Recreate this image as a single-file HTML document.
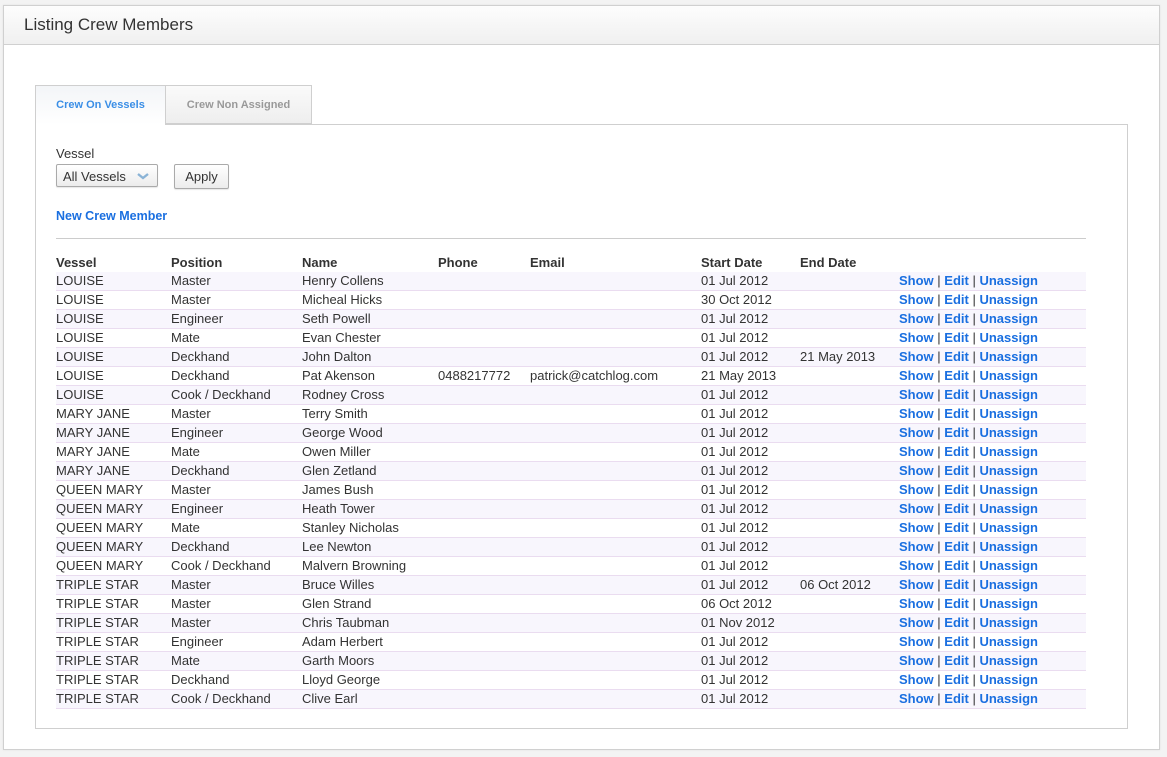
<!DOCTYPE html>
<html><head><meta charset="utf-8"><style>
body{margin:0;background:#f3f3f3;font-family:"Liberation Sans",sans-serif;width:1167px;height:757px;overflow:hidden;position:relative}
.outer{position:absolute;left:3px;top:5px;width:1155px;height:743px;background:#fff;border:1px solid #d0d0d0;box-shadow:0 0 2px rgba(0,0,0,.08)}
.hdr{height:38px;border-bottom:1px solid #d0d0d0;background:linear-gradient(#fdfdfd,#f0f0f0);font-size:17px;color:#333;line-height:37px;padding-left:20px}
.tabbox{position:absolute;left:31px;top:118px;width:1091px;height:603px;border:1px solid #cfcfcf}
.tab{position:absolute;top:79px;height:39px;font-size:11px;font-weight:bold;line-height:38px;text-align:center;box-sizing:border-box}
.t1{left:31px;width:131px;color:#3a8ee6;background:linear-gradient(#f3f5f8,#fff);border:1px solid #cfcfcf;border-bottom:none;height:40px;z-index:2}
.t2{left:161px;width:147px;color:#999;background:linear-gradient(#fafafa,#eee);border:1px solid #cfcfcf}
.lbl{position:absolute;left:52px;top:140px;font-size:13px;color:#333}
.sel{position:absolute;left:52px;top:158px;width:102px;height:23px;border:1px solid #aaa;border-radius:2px;background:linear-gradient(#fff,#ececec);font-size:13px;line-height:23px;padding-left:6px;box-sizing:border-box;color:#333;box-shadow:0 1px 1px rgba(0,0,0,.1)}
.sel svg{position:absolute;right:8px;top:8px}
.btn{position:absolute;left:170px;top:158px;width:55px;height:25px;border:1px solid #aaa;border-radius:2px;background:linear-gradient(#fff,#ececec);font-size:13px;line-height:23px;text-align:center;box-sizing:border-box;color:#333;box-shadow:0 1px 1px rgba(0,0,0,.1)}
.new{position:absolute;left:52px;top:203px;font-size:12.5px;font-weight:bold;color:#1a6fe0}
.hr{position:absolute;left:52px;top:232px;width:1030px;border-top:1px solid #ccc}
table{position:absolute;left:52px;top:248px;width:1030px;border-collapse:collapse;font-size:13px;color:#333}
th{text-align:left;font-weight:bold;height:18px;padding:0;line-height:18px}
td{padding:0;height:18px;line-height:18px;border-bottom:1px solid #eadcf0;white-space:nowrap}
tbody tr:nth-child(odd){background:#f8f6fd}
a{color:#1a6fe0;font-weight:bold;text-decoration:none}
</style></head><body>
<div class="outer">
<div class="hdr">Listing Crew Members</div>
<div class="tabbox"></div>
<div class="tab t1">Crew On Vessels</div>
<div class="tab t2">Crew Non Assigned</div>
<div class="lbl">Vessel</div>
<div class="sel">All Vessels<svg width="12" height="7" viewBox="0 0 12 7"><path d="M1 1l5 4 5-4" fill="none" stroke="#8ab3d6" stroke-width="2.4"/></svg></div>
<div class="btn">Apply</div>
<div class="new">New Crew Member</div>
<div class="hr"></div>
<table>
<colgroup><col style="width:115px"><col style="width:131px"><col style="width:136px"><col style="width:92px"><col style="width:171px"><col style="width:99px"><col style="width:99px"><col></colgroup>
<thead><tr><th>Vessel</th><th>Position</th><th>Name</th><th>Phone</th><th>Email</th><th>Start Date</th><th>End Date</th><th></th></tr></thead>
<tbody>
<tr><td>LOUISE</td><td>Master</td><td>Henry Collens</td><td></td><td></td><td>01 Jul 2012</td><td></td><td><a>Show</a> | <a>Edit</a> | <a>Unassign</a></td></tr>
<tr><td>LOUISE</td><td>Master</td><td>Micheal Hicks</td><td></td><td></td><td>30 Oct 2012</td><td></td><td><a>Show</a> | <a>Edit</a> | <a>Unassign</a></td></tr>
<tr><td>LOUISE</td><td>Engineer</td><td>Seth Powell</td><td></td><td></td><td>01 Jul 2012</td><td></td><td><a>Show</a> | <a>Edit</a> | <a>Unassign</a></td></tr>
<tr><td>LOUISE</td><td>Mate</td><td>Evan Chester</td><td></td><td></td><td>01 Jul 2012</td><td></td><td><a>Show</a> | <a>Edit</a> | <a>Unassign</a></td></tr>
<tr><td>LOUISE</td><td>Deckhand</td><td>John Dalton</td><td></td><td></td><td>01 Jul 2012</td><td>21 May 2013</td><td><a>Show</a> | <a>Edit</a> | <a>Unassign</a></td></tr>
<tr><td>LOUISE</td><td>Deckhand</td><td>Pat Akenson</td><td>0488217772</td><td>patrick@catchlog.com</td><td>21 May 2013</td><td></td><td><a>Show</a> | <a>Edit</a> | <a>Unassign</a></td></tr>
<tr><td>LOUISE</td><td>Cook / Deckhand</td><td>Rodney Cross</td><td></td><td></td><td>01 Jul 2012</td><td></td><td><a>Show</a> | <a>Edit</a> | <a>Unassign</a></td></tr>
<tr><td>MARY JANE</td><td>Master</td><td>Terry Smith</td><td></td><td></td><td>01 Jul 2012</td><td></td><td><a>Show</a> | <a>Edit</a> | <a>Unassign</a></td></tr>
<tr><td>MARY JANE</td><td>Engineer</td><td>George Wood</td><td></td><td></td><td>01 Jul 2012</td><td></td><td><a>Show</a> | <a>Edit</a> | <a>Unassign</a></td></tr>
<tr><td>MARY JANE</td><td>Mate</td><td>Owen Miller</td><td></td><td></td><td>01 Jul 2012</td><td></td><td><a>Show</a> | <a>Edit</a> | <a>Unassign</a></td></tr>
<tr><td>MARY JANE</td><td>Deckhand</td><td>Glen Zetland</td><td></td><td></td><td>01 Jul 2012</td><td></td><td><a>Show</a> | <a>Edit</a> | <a>Unassign</a></td></tr>
<tr><td>QUEEN MARY</td><td>Master</td><td>James Bush</td><td></td><td></td><td>01 Jul 2012</td><td></td><td><a>Show</a> | <a>Edit</a> | <a>Unassign</a></td></tr>
<tr><td>QUEEN MARY</td><td>Engineer</td><td>Heath Tower</td><td></td><td></td><td>01 Jul 2012</td><td></td><td><a>Show</a> | <a>Edit</a> | <a>Unassign</a></td></tr>
<tr><td>QUEEN MARY</td><td>Mate</td><td>Stanley Nicholas</td><td></td><td></td><td>01 Jul 2012</td><td></td><td><a>Show</a> | <a>Edit</a> | <a>Unassign</a></td></tr>
<tr><td>QUEEN MARY</td><td>Deckhand</td><td>Lee Newton</td><td></td><td></td><td>01 Jul 2012</td><td></td><td><a>Show</a> | <a>Edit</a> | <a>Unassign</a></td></tr>
<tr><td>QUEEN MARY</td><td>Cook / Deckhand</td><td>Malvern Browning</td><td></td><td></td><td>01 Jul 2012</td><td></td><td><a>Show</a> | <a>Edit</a> | <a>Unassign</a></td></tr>
<tr><td>TRIPLE STAR</td><td>Master</td><td>Bruce Willes</td><td></td><td></td><td>01 Jul 2012</td><td>06 Oct 2012</td><td><a>Show</a> | <a>Edit</a> | <a>Unassign</a></td></tr>
<tr><td>TRIPLE STAR</td><td>Master</td><td>Glen Strand</td><td></td><td></td><td>06 Oct 2012</td><td></td><td><a>Show</a> | <a>Edit</a> | <a>Unassign</a></td></tr>
<tr><td>TRIPLE STAR</td><td>Master</td><td>Chris Taubman</td><td></td><td></td><td>01 Nov 2012</td><td></td><td><a>Show</a> | <a>Edit</a> | <a>Unassign</a></td></tr>
<tr><td>TRIPLE STAR</td><td>Engineer</td><td>Adam Herbert</td><td></td><td></td><td>01 Jul 2012</td><td></td><td><a>Show</a> | <a>Edit</a> | <a>Unassign</a></td></tr>
<tr><td>TRIPLE STAR</td><td>Mate</td><td>Garth Moors</td><td></td><td></td><td>01 Jul 2012</td><td></td><td><a>Show</a> | <a>Edit</a> | <a>Unassign</a></td></tr>
<tr><td>TRIPLE STAR</td><td>Deckhand</td><td>Lloyd George</td><td></td><td></td><td>01 Jul 2012</td><td></td><td><a>Show</a> | <a>Edit</a> | <a>Unassign</a></td></tr>
<tr><td>TRIPLE STAR</td><td>Cook / Deckhand</td><td>Clive Earl</td><td></td><td></td><td>01 Jul 2012</td><td></td><td><a>Show</a> | <a>Edit</a> | <a>Unassign</a></td></tr>
</tbody></table>
</div>
</body></html>
